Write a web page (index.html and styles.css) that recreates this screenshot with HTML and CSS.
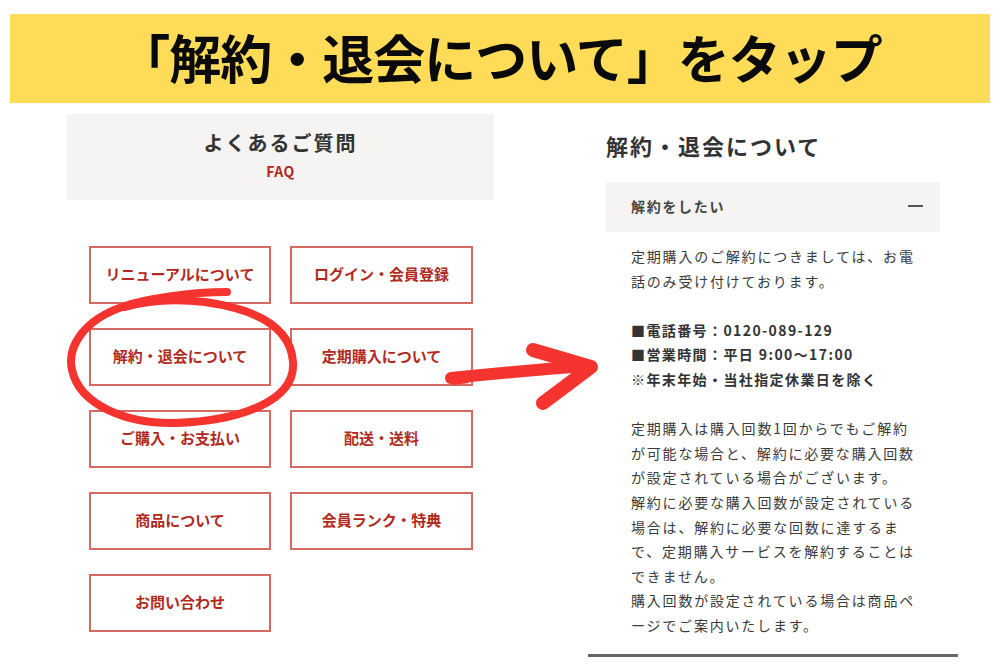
FILE: index.html
```html
<!DOCTYPE html>
<html lang="ja">
<head>
<meta charset="utf-8">
<link rel="stylesheet" href="styles.css">
</head>
<body>
<div class="page">
  <header class="banner">「解約・退会について」をタップ</header>
  <div class="main">
    <section class="faq">
      <div class="faq-head">
        <h1 class="faq-title">よくあるご質問</h1>
        <p class="faq-sub">FAQ</p>
      </div>
      <div class="cats">
        <div class="cat">リニューアルについて</div>
        <div class="cat">ログイン・会員登録</div>
        <div class="cat">解約・退会について</div>
        <div class="cat">定期購入について</div>
        <div class="cat">ご購入・お支払い</div>
        <div class="cat">配送・送料</div>
        <div class="cat">商品について</div>
        <div class="cat">会員ランク・特典</div>
        <div class="cat">お問い合わせ</div>
      </div>
    </section>
    <section class="detail">
      <div class="detail-inner">
        <h2 class="detail-title">解約・退会について</h2>
        <div class="acc-head">
          <span class="acc-q">解約をしたい</span>
          <span class="minus"></span>
        </div>
        <div class="acc-body">
          <p>定期購入のご解約につきましては、お電<br>話のみ受け付けております。</p>
          <p class="strong">■電話番号：0120-089-129<br>■営業時間：平日 9:00〜17:00<br>※年末年始・当社指定休業日を除く</p>
          <p class="last">定期購入は購入回数1回からでもご解約<br>が可能な場合と、解約に必要な購入回数<br>が設定されている場合がございます。<br>解約に必要な購入回数が設定されている<br>場合は、解約に必要な回数に達するま<br>で、定期購入サービスを解約することは<br>できません。<br>購入回数が設定されている場合は商品ペ<br>ージでご案内いたします。</p>
        </div>
      </div>
      <div class="divider"></div>
    </section>
  </div>
  <svg class="marks" width="1000" height="667" viewBox="0 0 1000 667" aria-hidden="true">
    <path d="M227 292 C190 292 145 299 125 306 C82 320 67 348 72 370 C80 406 128 424 175 423 C240 421 296 401 293 362 C291 330 262 310 205 302 C170 298 142 302 125 307" fill="none" stroke="#F5342F" stroke-width="8" stroke-linecap="round" stroke-linejoin="round"/>
    <path d="M451 378 Q520 371 584 366" fill="none" stroke="#F5342F" stroke-width="12" stroke-linecap="round"/>
    <path d="M448 373 L452 385 L470 383 Z" fill="#F5342F"/>
    <path d="M533 350 L591 367 L543 403" fill="none" stroke="#F5342F" stroke-width="14" stroke-linecap="round" stroke-linejoin="round"/>
  </svg>
</div>
</body>
</html>
```
FILE: styles.css
```css
html, body {
  margin: 0;
  padding: 0;
  background: #ffffff;
}
body {
  font-family: "Noto Sans CJK JP", "Noto Sans", sans-serif;
  color: #333333;
}
.page {
  position: relative;
  width: 1000px;
  height: 667px;
  overflow: hidden;
  padding-top: 14px;
  box-sizing: border-box;
}
.banner {
  margin: 0 10px;
  height: 89px;
  background: #FEDC58;
  display: flex;
  align-items: center;
  justify-content: center;
  font-size: 52px;
  font-weight: 700;
  letter-spacing: -1px;
  color: #0a0a0a;
  line-height: 1;
  padding-bottom: 4px;
  box-sizing: border-box;
}
.main {
  display: flex;
  margin-top: 11px;
}
.faq {
  margin-left: 67px;
  width: 427px;
}
.faq-head {
  background: #F5F4F2;
  height: 86px;
  display: flex;
  flex-direction: column;
  align-items: center;
  padding-top: 15px;
  box-sizing: border-box;
}
.faq-title {
  margin: 0;
  font-size: 20px;
  line-height: 28px;
  font-weight: 700;
  letter-spacing: 2px;
  color: #333333;
}
.faq-sub {
  margin: 0;
  margin-top: 4px;
  font-size: 14px;
  line-height: 20px;
  font-weight: 700;
  color: #B3261E;
  letter-spacing: 0.5px;
}
.cats {
  margin-top: 46px;
  padding-left: 22px;
  display: grid;
  grid-template-columns: 182px 183px;
  column-gap: 19px;
  row-gap: 24px;
}
.cat {
  height: 58px;
  border: 2px solid #D46A62;
  box-sizing: border-box;
  display: flex;
  align-items: center;
  justify-content: center;
  font-size: 15px;
  font-weight: 700;
  color: #B02A20;
  white-space: nowrap;
  padding-bottom: 3px;
}
.detail {
  margin-left: 94px;
  width: 370px;
}
.detail-inner {
  padding: 0 18px;
}
.detail-title {
  margin: 0;
  padding-top: 15px;
  font-size: 22px;
  line-height: 32px;
  font-weight: 700;
  letter-spacing: 2px;
  color: #333333;
}
.acc-head {
  margin-top: 21px;
  height: 50px;
  background: #F5F4F2;
  display: flex;
  align-items: center;
  justify-content: space-between;
  padding: 0 17px 0 25px;
}
.acc-q {
  font-size: 14px;
  font-weight: 700;
  letter-spacing: 1.7px;
  color: #444444;
  padding-bottom: 2px;
}
.minus {
  width: 15px;
  height: 2px;
  background: #555555;
  margin-top: -3px;
}
.acc-body {
  padding: 12px 0 16px 25px;
  font-size: 14px;
  line-height: 24.6px;
  letter-spacing: 1.8px;
  color: #3a3a3a;
  white-space: nowrap;
}
.acc-body p {
  margin: 0 0 24.6px 0;
}
.acc-body p.last {
  margin-bottom: 0;
}
.acc-body .strong {
  font-weight: 700;
  letter-spacing: 1.4px;
  color: #333333;
}
.divider {
  height: 3px;
  background: #666666;
}
.marks {
  position: absolute;
  left: 0;
  top: 0;
  pointer-events: none;
}
```
